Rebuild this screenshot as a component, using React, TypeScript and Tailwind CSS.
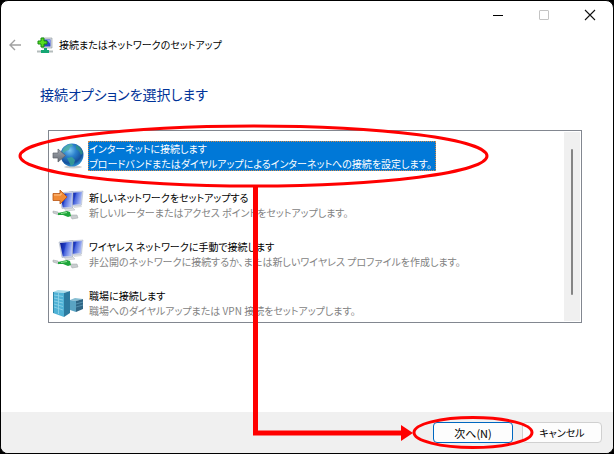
import React from "react";

const BackIcon = () => (
  <svg className="h-3 w-3" viewBox="0 0 12 12" fill="none" stroke="#a0a0a0" strokeWidth={1.4}>
    <path d="M12 6H1M6 1L1 6l5 5" />
  </svg>
);

const WizardIcon = () => (
  <svg className="h-4 w-4" viewBox="0 0 16 16">
    <path d="M5 1h10v10H5z" fill="#d9dee2" stroke="#8b959c" strokeWidth={0.6} />
    <path d="M6.500 2.500h7v7h-7z" fill="#3044c8" />
    <path d="M10 3h3.500v4z" fill="#8fa2ee" />
    <path d="M0 14.500h16" stroke="#b4bcbc" strokeWidth={2} />
    <path d="M7 11h3v2h2v3H4v-3h3z" fill="#14a673" />
    <path d="M4 1h3v3h3v3H7v3H4V7H1V4h3z" fill="#58dc20" stroke="#148a12" strokeWidth={1} />
  </svg>
);

const GlobeIcon = () => (
  <svg className="h-8 w-8" viewBox="0 0 32 32">
    <defs>
      <radialGradient id="globe" cx="0.4" cy="0.3" r="0.7">
        <stop offset="0" stopColor="#7cc8f2" />
        <stop offset="0.4" stopColor="#2b80cc" />
        <stop offset="0.8" stopColor="#15509c" />
        <stop offset="1" stopColor="#2f8fd0" />
      </radialGradient>
      <linearGradient id="grayArrow" x1="0" y1="0" x2="0" y2="1">
        <stop offset="0" stopColor="#a3a8af" />
        <stop offset="1" stopColor="#656b74" />
      </linearGradient>
    </defs>
    <ellipse cx="21" cy="27" rx="9" ry="1.500" fill="#cfcfcf" />
    <circle cx="20" cy="15" r="11.500" fill="url(#globe)" />
    <path d="M11 9c2-3 5-5 9-5l1 2-3 1-1 3-3 1-2 2-2-1z" fill="#4fb0a0" opacity="0.8" />
    <path d="M24 5c3 1 6 4 7 8l-2 2-2-4-3-2z" fill="#2f9486" opacity="0.8" />
    <path d="M15 18l5-1 3 3-1 4-3 2-2-4z" fill="#3aa593" opacity="0.8" />
    <path d="M1 13h5V9l7.500 6.500L6 22v-4H1z" fill="url(#grayArrow)" stroke="#5b626c" strokeWidth={0.7} />
  </svg>
);

const Monitors = () => (
  <>
    <defs>
      <linearGradient id="screen" x1="0" y1="0" x2="1" y2="0.3">
        <stop offset="0" stopColor="#0c1a8c" />
        <stop offset="0.45" stopColor="#1f3cc4" />
        <stop offset="0.55" stopColor="#4a66dc" />
        <stop offset="1" stopColor="#a9b9f4" />
      </linearGradient>
    </defs>
    <path d="M21 17l8-1 1 2-8 1z" fill="#d9dcdf" />
    <path d="M17 3l14-1-1.500 14L18 17z" fill="#cfd6ea" stroke="#a9b2c6" strokeWidth={0.5} />
    <path d="M18 4l12-1-1.300 12L19 16z" fill="url(#screen)" />
    <path d="M12 19l8-1 3 3-9 1z" fill="#dfe1e4" stroke="#b4b9bd" strokeWidth={0.5} />
    <path d="M7 4l14-1.500L20.500 19 10 19.500z" fill="#d8ddea" stroke="#9aa4b8" strokeWidth={0.5} />
    <path d="M8 5l12-1.300L19.500 18l-8.700.500z" fill="url(#screen)" />
    <path d="M1 22l5 1 1 3-6-2zM18 26l7 0 1 3-6 1z" fill="#c9cdcf" stroke="#9fa5a7" strokeWidth={0.5} />
    <path d="M6 24l9-2 3 1 1 4-3 1-5-2-5 0z" fill="#1fa53a" />
    <path d="M9 24.500l6-1" stroke="#8fe296" strokeWidth={1.2} />
  </>
);

const NewNetworkIcon = () => (
  <svg className="h-8 w-8" viewBox="0 0 32 32">
    <Monitors />
    <path
      d="M1 4.500h7V1l7 7-7 7v-3.500H1z"
      fill="#f08a35"
      stroke="#b95412"
      strokeWidth={0.8}
    />
    <path d="M2 6h7V4" fill="none" stroke="#ffc48b" strokeWidth={1} />
  </svg>
);

const WirelessIcon = () => (
  <svg className="h-8 w-8" viewBox="0 0 32 32">
    <Monitors />
  </svg>
);

const WorkplaceIcon = () => (
  <svg className="h-8 w-8" viewBox="0 0 32 32">
    <path d="M18 13l5-2 8 1-7 2z" fill="#86bdd2" />
    <path d="M18 13l6 1v11l-6-2z" fill="#5aa4c3" />
    <path d="M24 14l7-2v10l-7 3z" fill="#2f6685" />
    <path d="M24 17l7-2M24 20l7-2" stroke="#5e9ab8" strokeWidth={0.8} />
    <path d="M1 5l5-2 12 1-6 2z" fill="#a9dcea" />
    <path d="M1 5l11 1v24L1 26z" fill="#4fb2d6" />
    <path d="M12 6l6-2v22l-6 4z" fill="#2c7a9f" />
    <path
      d="M2 8l9 1.500M2 11l9 2M2 14l9 2M2 17l9 2.500M2 20l9 3M6.500 6v21"
      stroke="#93d6ea"
      strokeWidth={0.8}
    />
    <path d="M1.500 5v21" stroke="#2d88ac" />
  </svg>
);

const options = [
  {
    title: "インターネットに接続します",
    description: "ブロードバンドまたはダイヤルアップによるインターネットへの接続を設定します。",
    icon: <GlobeIcon />,
    selected: true,
  },
  {
    title: "新しいネットワークをセットアップする",
    description: "新しいルーターまたはアクセス ポイントをセットアップします。",
    icon: <NewNetworkIcon />,
    selected: false,
  },
  {
    title: "ワイヤレス ネットワークに手動で接続します",
    description: "非公開のネットワークに接続するか、または新しいワイヤレス プロファイルを作成します。",
    icon: <WirelessIcon />,
    selected: false,
  },
  {
    title: "職場に接続します",
    description: "職場へのダイヤルアップまたは VPN 接続をセットアップします。",
    icon: <WorkplaceIcon />,
    selected: false,
  },
];

const TitleBar: React.FC = () => (
  <div className="flex h-7 items-center justify-end">
    <button aria-label="最小化" className="flex h-7 w-[46px] items-center justify-center">
      <svg className="h-3 w-3" viewBox="0 0 12 12">
        <path d="M1 6.500h10" stroke="#000" />
      </svg>
    </button>
    <button
      aria-label="最大化"
      disabled
      className="flex h-7 w-[46px] items-center justify-center"
    >
      <svg className="h-3 w-3" viewBox="0 0 12 12">
        <rect x="1.500" y="1.500" width="9" height="9" rx="0.500" fill="none" stroke="#c4c4c4" />
      </svg>
    </button>
    <button aria-label="閉じる" className="flex h-7 w-[46px] items-center justify-center">
      <svg className="h-3 w-3" viewBox="0 0 12 12">
        <path d="M1 1l10 10M11 1L1 11" stroke="#111" strokeWidth={1.1} />
      </svg>
    </button>
  </div>
);

const App: React.FC = () => {
  return (
    <div className="bg-black">
      <div className="relative flex min-h-screen flex-col overflow-hidden rounded-lg border border-black bg-white font-['Noto_Sans_CJK_JP',sans-serif] text-[10px] text-black [font-feature-settings:'palt']">
        <TitleBar />

        <header className="flex h-8 items-center pl-2">
          <button aria-label="戻る" disabled>
            <BackIcon />
          </button>
          <div className="ml-4 flex items-center gap-1.5">
            <WizardIcon />
            <span className="leading-4">接続またはネットワークのセットアップ</span>
          </div>
        </header>

        <main className="flex-1 pr-[31px] pl-[47px]">
          <h1 className="mt-[21px] -ml-2 text-sm leading-6 text-[#003399]">
            接続オプションを選択します
          </h1>

          <div className="mt-6 flex border border-[#828790] p-px">
            <ul
              role="listbox"
              aria-label="接続オプション"
              className="flex min-w-0 flex-1 flex-col gap-[19px] pt-[9px] pb-[3px] pl-0.5"
            >
              {options.map((option) => (
                <li key={option.title} role="none" className="flex h-[30px] items-center gap-1">
                  <span className="shrink-0">{option.icon}</span>
                  <button
                    role="option"
                    aria-selected={option.selected}
                    className={
                      option.selected
                        ? "bg-[#0078d7] pr-1 pl-px text-left leading-[15px] text-white outline-1 -outline-offset-1 outline-[#d08a4a] outline-dotted"
                        : "pr-1 pl-px text-left leading-[15px]"
                    }
                  >
                    <span className="block whitespace-nowrap">{option.title}</span>
                    <span
                      className={
                        option.selected
                          ? "block whitespace-nowrap"
                          : "block whitespace-nowrap text-[#838383]"
                      }
                    >
                      {option.description}
                    </span>
                  </button>
                </li>
              ))}
            </ul>
            <div className="flex w-4 justify-center bg-[#f0f0f0] pt-[17px] pb-[26px]">
              <div className="w-0.5 rounded-full bg-[#858585]" />
            </div>
          </div>
        </main>

        <footer className="flex h-[41px] items-center justify-end gap-[9px] bg-[#f0f0f0] pr-[11px]">
          <button className="h-[21px] w-20 rounded border border-[#0067c0] bg-[#fdfdfd] text-[11px] leading-4">
            次へ(N)
          </button>
          <button className="h-[21px] w-20 rounded border border-[#d0d0d0] bg-[#fdfdfd] leading-4">
            キャンセル
          </button>
        </footer>

        {/* Red marks that guide the reader through the step */}
        <svg
          className="pointer-events-none absolute -top-px -left-px h-[454px] w-[614px]"
          viewBox="0 0 614 454"
          fill="none"
          stroke="#ff0000"
          aria-hidden="true"
        >
          <ellipse cx="253.500" cy="156" rx="233.500" ry="30" strokeWidth={3} />
          <path d="M255.500 186v247H402" strokeWidth={5} />
          <path d="M401 425l12 8-12 8z" fill="#ff0000" stroke="none" />
          <ellipse cx="473" cy="432.500" rx="59" ry="15" strokeWidth={3} />
        </svg>
      </div>
    </div>
  );
};

export default App;
